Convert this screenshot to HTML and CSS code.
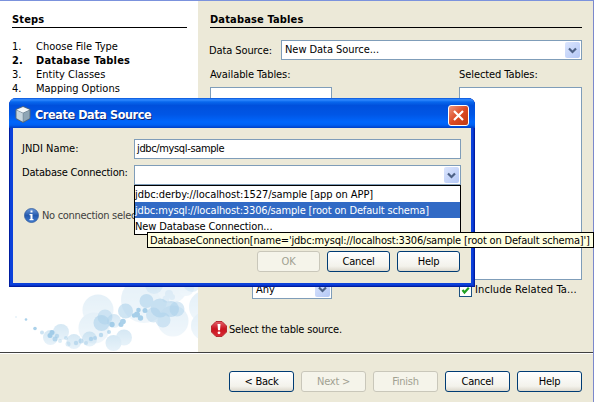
FILE: index.html
```html
<!DOCTYPE html>
<html lang="en">
<head>
<meta charset="utf-8">
<title>Database Tables</title>
<link rel="stylesheet" href="styles.css">
</head>
<body>
<div class="wizard">
  <div class="main">
    <aside class="steps">
      <h2 class="heading">Steps</h2>
      <ol class="step-list">
        <li><span>1.</span><span>Choose File Type</span></li>
        <li class="current"><span>2.</span><span>Database Tables</span></li>
        <li><span>3.</span><span>Entity Classes</span></li>
        <li><span>4.</span><span>Mapping Options</span></li>
      </ol>
      <svg class="bubbles" width="198" height="70" viewBox="0 282 198 70">
        <defs>
          <linearGradient id="bubble" x1="0" y1="0" x2="0" y2="1"><stop offset="0" stop-color="#a9d0e9"/><stop offset="1" stop-color="#cfe5f4"/></linearGradient>
        </defs>
        <g fill="url(#bubble)" opacity=".3">
          <circle cx="98" cy="310" r="15.5"/><circle cx="94" cy="328" r="15.5"/><circle cx="144" cy="300" r="23"/><circle cx="173" cy="321" r="15.500"/><circle cx="172" cy="288" r="15"/><circle cx="205" cy="307" r="16"/><circle cx="205" cy="326" r="14"/><circle cx="186" cy="288" r="8"/>
        </g>
        <g fill="url(#bubble)" opacity=".48">
          <circle cx="61" cy="332" r="8"/><circle cx="50.500" cy="337.500" r="7.500"/><circle cx="74" cy="341.500" r="7.500"/><circle cx="89.500" cy="339" r="7.500"/><circle cx="124" cy="337.500" r="8"/><circle cx="113.500" cy="343" r="8"/><circle cx="114" cy="321" r="7"/><circle cx="154" cy="285" r="9"/><circle cx="192" cy="283" r="9"/>
        </g>
        <g fill="#a9d0eb">
          <g opacity=".55"><circle cx="101.500" cy="323" r="8"/><circle cx="125.500" cy="311" r="7.500"/><circle cx="146.500" cy="301" r="7"/><circle cx="160" cy="308" r="9.500"/><circle cx="171" cy="309" r="8"/></g>
          <g opacity=".45"><circle cx="105" cy="317" r="7.500"/><circle cx="153.500" cy="315" r="7.500"/><circle cx="163" cy="320" r="7.500"/><circle cx="177" cy="309" r="7.500"/><circle cx="104" cy="317" r="4.500"/></g>
          <g opacity=".22"><circle cx="169" cy="294" r="4"/><circle cx="166" cy="299" r="3.500"/><circle cx="172" cy="297" r="3"/></g>
        </g>
        <g fill="#8fc2e4" opacity=".75">
          <circle cx="26" cy="319.500" r="1.300"/><circle cx="35" cy="328.500" r="1.800"/><circle cx="42" cy="332.500" r="2" opacity=".6"/><circle cx="52" cy="332.500" r="2.500"/><circle cx="50" cy="335.500" r="2.500"/><circle cx="57" cy="336" r="2.200" opacity=".6"/><circle cx="55" cy="339" r="2.500" opacity=".7"/><circle cx="60" cy="341" r="2" opacity=".4"/><circle cx="66" cy="338" r="2" opacity=".5"/><circle cx="68" cy="344" r="2.500" opacity=".4"/><circle cx="76" cy="343" r="2.200" opacity=".6"/><circle cx="81" cy="341" r="2.500" opacity=".6"/><circle cx="86" cy="343" r="2" opacity=".5"/><circle cx="91" cy="339" r="2.200" opacity=".7"/><circle cx="95" cy="338" r="2" opacity=".6"/><circle cx="101" cy="335" r="2.200" opacity=".7"/><circle cx="109" cy="332" r="2" opacity=".7"/><circle cx="112" cy="324.500" r="2.700"/><circle cx="121" cy="324.500" r="2.500"/><circle cx="123" cy="321.500" r="2.800"/><circle cx="134" cy="315.500" r="2.200"/><circle cx="137" cy="314.500" r="3"/><circle cx="140.500" cy="318" r="2.700"/><circle cx="138.500" cy="310" r="2.300"/><circle cx="145" cy="310.500" r="2.500"/><circle cx="16" cy="317" r="1" opacity=".3"/>
        </g>
      </svg>
    </aside>
    <section class="panel">
      <h2 class="heading">Database Tables</h2>
      <div class="source-row">
        <label class="source-label">Data Source:</label>
        <div class="combo"><span class="source-value">New Data Source...</span><span class="drop"><svg width="9" height="7" viewBox="0 0 9 7"><path d="M1 1.500 4.500 5 8 1.500" /></svg></span></div>
      </div>
      <div class="tables">
        <div class="available">
          <label class="avail-label">Available Tables:</label>
          <div class="list"></div>
          <div class="combo any"><span>Any</span><span class="drop"><svg width="9" height="7" viewBox="0 0 9 7"><path d="M1 1.500 4.500 5 8 1.500" /></svg></span></div>
        </div>
        <div class="selected">
          <label class="sel-label">Selected Tables:</label>
          <div class="list"></div>
          <label class="check-row"><span class="check"><svg width="9" height="9" viewBox="0 0 9 9"><path d="M1.500 4 3.500 6.500 7.800 1.800" /></svg></span><span class="include">Include Related Ta...</span></label>
        </div>
      </div>
      <div class="error">
        <svg width="16" height="16" viewBox="0 0 16 16"><defs><linearGradient id="red" x1="0" y1="0" x2="0" y2="1"><stop offset="0" stop-color="#e4606a"/><stop offset=".5" stop-color="#c9141f"/><stop offset="1" stop-color="#d92b34"/></linearGradient></defs><path d="M5 .5h6L15.500 5v6L11 15.500H5L.5 11V5z" fill="url(#red)" stroke="#b52a31"/><path d="M6.500 3h3L9 9.300H7z" fill="#fff"/><circle cx="8" cy="11.800" r="1.400" fill="#fff"/></svg>
        <span class="error-text">Select the table source.</span>
      </div>
    </section>
  </div>
  <footer class="footer">
    <button class="btn">&lt; Back</button>
    <button class="btn off">Next &gt;</button>
    <button class="btn off">Finish</button>
    <button class="btn">Cancel</button>
    <button class="btn">Help</button>
  </footer>
</div>

<div class="dialog">
  <div class="titlebar">
    <svg width="16" height="17" viewBox="0 0 16 17"><path d="M8 .5 15 3.500V12.500L8 16.500 1 12.500V3.500z" fill="#647888" stroke="#52677b"/><path d="M8 1 14.500 3.800 8 6.800 1.500 3.800z" fill="#f4f8fa"/><path d="M1.500 4.200 7.800 7.200V15.800L1.500 12.300z" fill="#c6d5de"/><path d="M14.500 4.200 8.300 7.200V15.800L14.500 12.300z" fill="#8ea5b5"/></svg>
    <span class="title">Create Data Source</span>
    <span class="close"><svg width="13" height="13" viewBox="0 0 13 13"><path d="M2 2 11 11M11 2 2 11"/></svg></span>
  </div>
  <div class="dialog-body">
    <div class="field"><label class="jndi">JNDI Name:</label><div class="input"><span class="jndi-value">jdbc/mysql-sample</span></div></div>
    <div class="field"><label class="conn">Database Connection:</label>
      <div class="combo"><span></span><span class="drop"><svg width="9" height="7" viewBox="0 0 9 7"><path d="M1 1.500 4.500 5 8 1.500" /></svg></span>
        <ul class="popup">
          <li class="opt-derby">jdbc:derby://localhost:1527/sample [app on APP]</li>
          <li class="opt-mysql">jdbc:mysql://localhost:3306/sample [root on Default schema]</li>
          <li class="opt-new">New Database Connection...</li>
        </ul>
      </div>
    </div>
    <div class="info">
      <svg width="15" height="15" viewBox="0 0 15 15"><defs><linearGradient id="blue" x1="0" y1="0" x2="0" y2="1"><stop offset="0" stop-color="#6d9bdc"/><stop offset=".5" stop-color="#2459ad"/><stop offset="1" stop-color="#3f7bd0"/></linearGradient></defs><circle cx="7.500" cy="7.500" r="7" fill="url(#blue)" stroke="#335d9d" stroke-width=".8"/><path d="M6.500 2.500h2v2h-2zM5.500 6h3v5h1v1.200h-4V11h1V7.200h-1z" fill="#fff"/></svg>
      <span class="info-text">No connection selected</span>
    </div>
    <div class="dialog-buttons">
      <button class="btn off">OK</button>
      <button class="btn">Cancel</button>
      <button class="btn">Help</button>
    </div>
  </div>
</div>
<div class="tooltip"><span>DatabaseConnection[name='jdbc:mysql://localhost:3306/sample [root on Default schema]']</span></div>
</body>
</html>
```

FILE: styles.css
```css
* { box-sizing: border-box; }
body { margin: 0; width: 594px; height: 402px; overflow: hidden; position: relative; color: #000; background: #ece9d8; font: 11px/14px "DejaVu Sans Condensed", "DejaVu Sans", sans-serif; font-stretch: condensed; letter-spacing: -.3px; white-space: nowrap; }
h2, ul, ol { margin: 0; padding: 0; list-style: none; }
svg { display: block; flex: none; }
.wizard { height: 402px; display: flex; flex-direction: column; border-top: 1px solid #7b92dd; border-right: 1px solid #7b88cc; }
.main { height: 351px; display: flex; }
.steps { width: 198px; background: #fff; padding: 12px 11px 0 12px; display: flex; flex-direction: column; }
.heading { height: 15px; border-bottom: 1px solid #000; font-size: 11px; line-height: 14px; font-weight: bold; letter-spacing: .15px; }
.step-list { margin-top: 12px; letter-spacing: 0; }
.step-list li { height: 14px; display: flex; }
.step-list li span:first-child { width: 24px; }
.step-list .current { font-weight: bold; letter-spacing: .2px; }
.bubbles { margin: auto 0 0 -12px; }
.panel { flex: 1; padding: 12px 11px 0 12px; display: flex; flex-direction: column; }
.source-row { margin-top: 12px; display: flex; align-items: center; }
.source-label { width: 72px; margin-left: -1px; padding-top: 2px; letter-spacing: -.1px; }
.source-value { letter-spacing: -.05px; }
.avail-label, .sel-label { letter-spacing: -.08px; }
.combo { flex: 1; height: 20px; border: 1px solid #7f9db9; background: #fff; display: flex; align-items: center; justify-content: space-between; padding: 0 1px 0 3px; position: relative; }
.drop { width: 15px; height: 16px; border-radius: 2px; background: linear-gradient(135deg, #dbe5fd, #b4c8f6); display: flex; align-items: center; justify-content: center; }
.drop path { fill: none; stroke: #4d6185; stroke-width: 2.2; }
.tables { margin-top: 8px; height: 231px; display: flex; justify-content: space-between; }
.available { width: 122px; display: flex; flex-direction: column; }
.selected { width: 123px; display: flex; flex-direction: column; }
.list { margin-top: 5px; height: 193px; border: 1px solid #7f9db9; background: #fff; }
.available .list { height: 186px; }
.any { flex: none; width: 80px; margin: 6px 0 0 42px; letter-spacing: 0; }
.any > span:first-child { padding-top: 2px; }
.check-row { display: flex; align-items: center; margin-top: 3px; gap: 3px; }
.check { width: 13px; height: 13px; border: 1px solid #1c5180; background: #fff; display: flex; align-items: center; justify-content: center; }
.include { letter-spacing: .1px; }
.check path { fill: none; stroke: #21a121; stroke-width: 2.2; }
.error { margin-top: 22px; display: flex; align-items: center; gap: 2px; padding-left: 1px; }
.error-text { padding-top: 2px; letter-spacing: -.18px; }
.footer { flex: 1; border-top: 1px solid #404040; box-shadow: inset 0 1px #fff; padding: 18px 11px 0; display: flex; justify-content: flex-end; gap: 7px; }
.btn { width: 65px; height: 21px; padding: 0; border: 1px solid #003c74; border-radius: 3px; background: linear-gradient(#fff, #f3f2eb 75%, #dcd8cc); font: inherit; letter-spacing: -.25px; color: #000; text-align: center; }
.off { color: #a1a192; border-color: #c9c7ba; background: #f5f4ea; }
.dialog { position: absolute; z-index: 1; left: 9px; top: 98px; width: 466px; height: 189px; border-radius: 7px 7px 0 0; background: #0b41da; box-shadow: inset 1px -1px #001ea0, inset -1px 0 #001ea0, inset -2px -2px #0831c8; padding: 0 4px 4px; }
.titlebar { height: 30px; margin: 0 -4px; padding: 2px 6px 0 6px; border-radius: 7px 7px 0 0; background: linear-gradient(#0753d8, #328bff 6%, #0867ed 13%, #0050dc 25%, #0056e6 55%, #0066fc 80%, #0060f3 90%, #003fc5); display: flex; align-items: center; }
.title { flex: 1; margin-left: 4px; padding-top: 1px; color: #fff; font-size: 12.5px; font-weight: bold; letter-spacing: -.4px; text-shadow: 1px 1px #0a2474; }
.close { width: 21px; height: 21px; margin-top: 2px; border: 1px solid #fff; border-radius: 3px; background: linear-gradient(135deg, #ef967e, #dc4a24 50%, #c13a12); display: flex; align-items: center; justify-content: center; }
.close path { stroke: #fff; stroke-width: 2.2; }
.dialog-body { height: 155px; background: #ece9d8; padding: 11px 10px 0 9px; display: flex; flex-direction: column; }
.field { height: 20px; margin-bottom: 6px; display: flex; align-items: center; }
.field label { width: 112px; flex: none; }
.jndi { letter-spacing: 0; }
.conn { letter-spacing: -.2px; padding-bottom: 4px; }
.input { flex: 1; height: 20px; border: 1px solid #7f9db9; background: #fff; padding: 2px; letter-spacing: -.36px; }
.popup { position: absolute; left: -1px; top: 19px; width: 327px; height: 50px; border: 1px solid #000; background: #fff; }
.popup li { height: 16px; line-height: 17px; }
.opt-derby { letter-spacing: -.06px; }
.opt-mysql { background: #316ac5; color: #fff; letter-spacing: -.16px; }
.opt-new { letter-spacing: -.12px; }
.info { margin: 17px 0 0 2px; height: 15px; display: flex; align-items: center; gap: 3px; color: #404040; }
.dialog-buttons { display: flex; justify-content: flex-end; gap: 7px; margin: 28px 1px 0 0; }
.dialog-buttons .btn { width: 63px; }
.tooltip { position: absolute; z-index: 2; left: 147px; top: 232px; width: 447px; height: 16px; border: 1px solid #000; background: #ffffe1; padding-left: 2px; line-height: 15px; letter-spacing: -.19px; }
```
